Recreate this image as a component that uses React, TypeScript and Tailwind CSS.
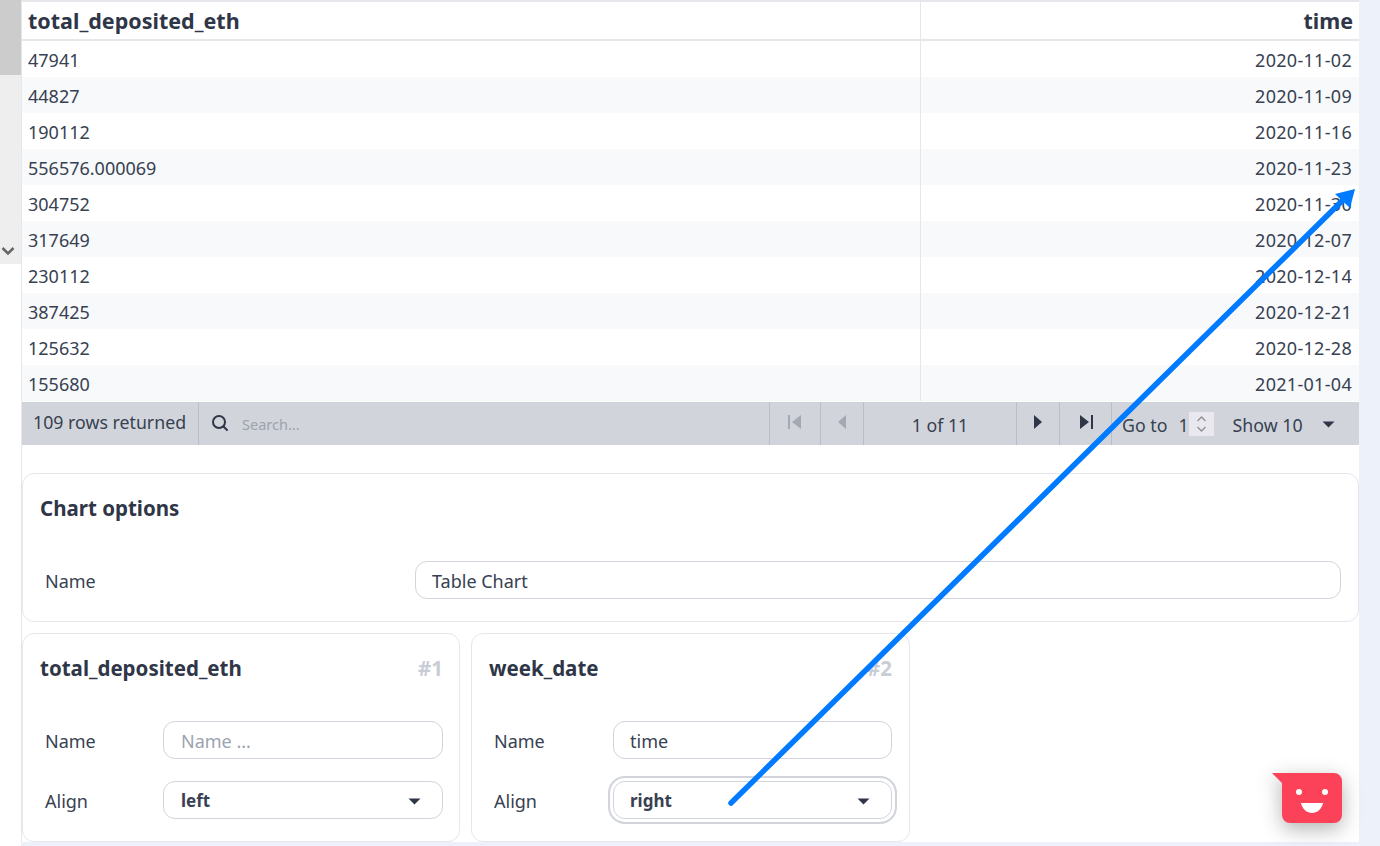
const rows = [
  ['47941', '2020-11-02'],
  ['44827', '2020-11-09'],
  ['190112', '2020-11-16'],
  ['556576.000069', '2020-11-23'],
  ['304752', '2020-11-30'],
  ['317649', '2020-12-07'],
  ['230112', '2020-12-14'],
  ['387425', '2020-12-21'],
  ['125632', '2020-12-28'],
  ['155680', '2021-01-04'],
];

function Caret() {
  return (
    <svg width="13" height="7" viewBox="0 0 13 7" className="text-[#2f3647]">
      <path d="M0.5 0.5H12.5L6.5 6.5Z" fill="currentColor" />
    </svg>
  );
}

function PagerIcon({ d, dim }: { d: string; dim?: boolean }) {
  return (
    <svg width="18" height="16" viewBox="0 0 18 16" className={dim ? 'text-[#a3a8b3]' : 'text-[#2f3647]'}>
      <path d={d} fill="currentColor" />
    </svg>
  );
}

function Field({ label, labelWidth, children }: { label: string; labelWidth: string; children: React.ReactNode }) {
  return (
    <div className="flex items-center">
      <div className={`${labelWidth} pl-[5px] pt-[2px] text-[18px] text-[#374151]`}>{label}</div>
      {children}
    </div>
  );
}

function Card({ title, num, children, className }: { title: string; num?: string; children: React.ReactNode; className: string }) {
  return (
    <div className={`${className} rounded-xl border border-[#e5e7eb] bg-white pl-[17px]`}>
      <div className="flex h-[69px] items-center justify-between">
        <span className="text-[20.5px] font-bold text-[#2f3647]">{title}</span>
        {num && <span className="text-[20.5px] font-bold text-[#c9cdd5]">{num}</span>}
      </div>
      {children}
    </div>
  );
}

const boxClass = 'flex h-[38px] items-center rounded-xl border border-[#d1d5db] bg-white pr-[21px] pt-[2px] text-[18px]';

export default function App() {
  return (
    <div className="relative flex h-[846px] w-[1380px] overflow-hidden bg-[#edf1fa] font-['Noto_Sans',sans-serif]">
      <div className="h-full w-[21px] bg-white">
        <div className="flex h-[264px] flex-col justify-between bg-[#eeeeee]">
          <div className="h-[75px] bg-[#cccccc]" />
          <div className="flex h-[24px] items-center justify-center pb-[2px] pr-[5px] text-[#666]">
            <svg width="14" height="10" viewBox="0 0 14 10">
              <path d="M1.5 2L7 7.5L12.5 2" fill="none" stroke="currentColor" strokeWidth="2.5" />
            </svg>
          </div>
        </div>
      </div>

      <div className="h-[842px] w-[1338px] border-l border-[#e5e7eb] bg-white">
        <div className="border-t-2 border-[#e5e7eb]">
          <div className="box-content flex h-[37px] items-center border-b-2 border-[#e5e7eb] text-[21.5px] font-bold text-[#2f3647]">
            <div className="flex h-full w-[899px] items-center border-r border-[#e5e7eb] pl-[6px] pt-[2px]">total_deposited_eth</div>
            <div className="flex-1 pr-[6px] pt-[2px] text-right">time</div>
          </div>
          {rows.map((r, i) => (
            <div key={r[0]} className={`flex h-[36px] items-center text-[18px] text-[#374151] ${i % 2 ? 'bg-[#f8f9fb]' : 'bg-white'}`}>
              <div className="flex h-full w-[899px] items-center border-r border-[#e5e7eb] pl-[6px] pt-[2px]">{r[0]}</div>
              <div className="flex-1 pr-[7px] pt-[2px] text-right tracking-[0.3px]">{r[1]}</div>
            </div>
          ))}
        </div>

        <div className="mt-px flex h-[43px] items-stretch bg-[#d1d5db] text-[17.75px] text-[#374151]">
          <div className="flex w-[177px] items-center border-r border-[#b9bec8] pb-[2px] pl-[11px]">109 rows returned</div>
          <div className="flex w-[570px] items-center pl-[12px]">
            <svg width="18" height="18" viewBox="0 0 18 18" className="mb-[2px] text-[#2f3647]">
              <circle cx="8" cy="8" r="6" fill="none" stroke="currentColor" strokeWidth="2" />
              <path d="M12.5 12.5L16 16" stroke="currentColor" strokeWidth="2" strokeLinecap="round" />
            </svg>
            <span className="ml-[13px] mt-[3px] text-[14.5px] text-[#9ca3af]">Search...</span>
          </div>
          <div className="flex w-[52px] items-center justify-center border-x border-[#b9bec8] pb-[3px]">
            <PagerIcon dim d="M2 1H4V15H2ZM15 1V15L6 8Z" />
          </div>
          <div className="flex w-[43px] items-center justify-center border-r border-[#b9bec8] pb-[3px]">
            <PagerIcon dim d="M13 1V15L5 8Z" />
          </div>
          <div className="flex w-[153px] items-center justify-center border-r border-[#b9bec8] pt-[3px]">1 of 11</div>
          <div className="flex w-[43px] items-center justify-center border-r border-[#b9bec8] pb-[3px]">
            <PagerIcon d="M5 1V15L13 8Z" />
          </div>
          <div className="flex w-[52px] items-center justify-center border-r border-[#b9bec8] pb-[3px]">
            <PagerIcon d="M3 1L12 8L3 15ZM14 1H16V15H14Z" />
          </div>
          <div className="flex flex-1 items-center pl-[10px]">
            <span className="pt-[3px]">Go to</span>
            <span className="ml-[11px] pt-[3px]">1</span>
            <div className="mt-[1px] flex h-[24px] w-[25px] items-center justify-center bg-[#e8e8ee] text-[#8b8f99]">
              <svg width="11" height="18" viewBox="0 0 11 18">
                <path d="M1.5 6L5.5 2L9.5 6M1.5 12L5.5 16L9.5 12" fill="none" stroke="currentColor" strokeWidth="1.3" />
              </svg>
            </div>
            <span className="ml-[19px] pt-[3px]">Show 10</span>
            <div className="ml-[19px] mt-[2px]"><Caret /></div>
          </div>
        </div>

        <div className="mt-[28px] flex flex-col gap-[11px]">
          <Card title="Chart options" className="h-[149px] w-[1337px] pr-[17px]">
            <div className="mt-[18px]">
              <Field label="Name" labelWidth="w-[375px]">
                <div className={`${boxClass} w-[926px] pl-[16px] text-[#374151]`}>Table Chart</div>
              </Field>
            </div>
          </Card>
          <div className="flex gap-[11px]">
            <Card title="total_deposited_eth" num="#1" className="h-[209px] w-[438px] pr-[16px]">
              <div className="mt-[18px] flex flex-col gap-[22px]">
                <Field label="Name" labelWidth="w-[123px]">
                  <div className={`${boxClass} w-[280px] pl-[17px] text-[#9ca3af]`}>Name ...</div>
                </Field>
                <Field label="Align" labelWidth="w-[123px]">
                  <div className={`${boxClass} w-[280px] justify-between pl-[17px] text-[#374151]`}>
                    <span className="text-[17px] font-bold">left</span>
                    <Caret />
                  </div>
                </Field>
              </div>
            </Card>
            <Card title="week_date" num="#2" className="h-[209px] w-[439px] pr-[17px]">
              <div className="mt-[18px] flex flex-col gap-[22px]">
                <Field label="Name" labelWidth="w-[124px]">
                  <div className={`${boxClass} w-[279px] pl-[16px] text-[#374151]`}>time</div>
                </Field>
                <Field label="Align" labelWidth="w-[124px]">
                  <div className={`${boxClass} w-[279px] justify-between pl-[16px] text-[#374151] outline-2 outline-offset-[3px] outline-[#d1d5db]`}>
                    <span className="text-[17px] font-bold">right</span>
                    <Caret />
                  </div>
                </Field>
              </div>
            </Card>
          </div>
        </div>
      </div>

      {/* annotation arrow drawn over the screenshot */}
      <svg className="pointer-events-none absolute left-0 top-0" width="1380" height="846" viewBox="0 0 1380 846">
        <path d="M731 803L1342 201" stroke="#007bff" strokeWidth="5.5" strokeLinecap="round" />
        <path d="M1355 189L1335 194L1350 208Z" fill="#007bff" />
      </svg>

      {/* chat widget */}
      <svg className="absolute left-[1272px] top-[773px] drop-shadow-[0_6px_10px_rgba(0,0,0,0.3)]" width="70" height="50" viewBox="0 0 70 50">
        <path d="M0 0H62A8 8 0 0 1 70 8V42A8 8 0 0 1 62 50H18A8 8 0 0 1 10 42V10Z" fill="#fb4258" />
        <circle cx="27" cy="19" r="3" fill="#fff" />
        <circle cx="53" cy="19" r="3" fill="#fff" />
        <path d="M29 30H51C50 36 45 40 40 40C35 40 30 36 29 30Z" fill="#fff" />
      </svg>
    </div>
  );
}
